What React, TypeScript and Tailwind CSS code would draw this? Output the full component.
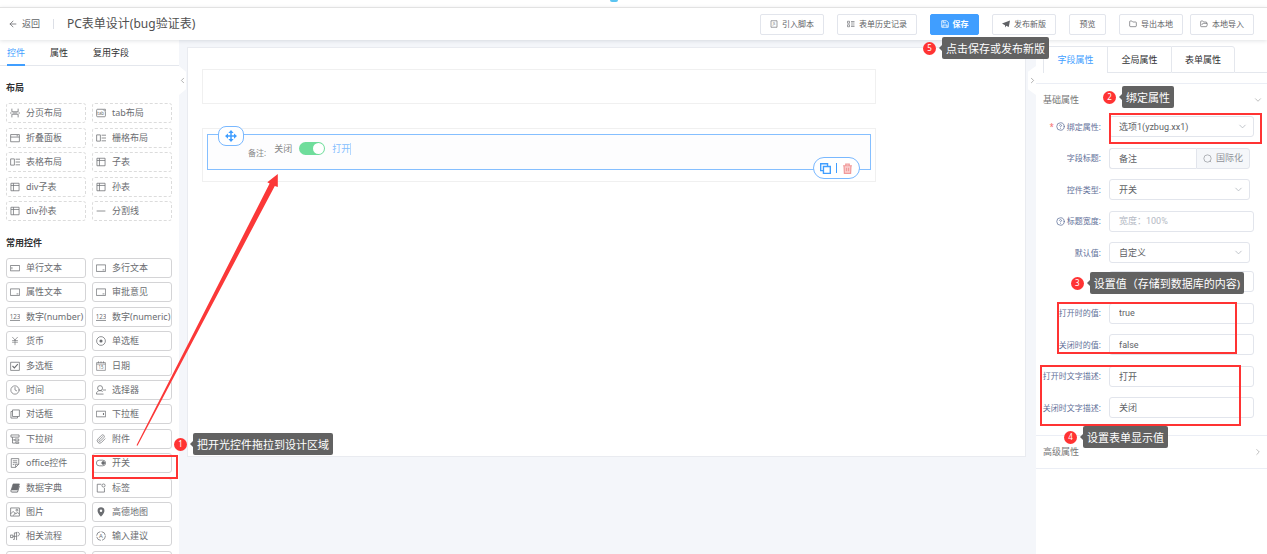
import type { ReactNode } from 'react';
import { ArrowLeft, ChevronDown, ChevronLeft, ChevronRight, CircleQuestionMark, Clock, Folder, FolderOpen, JapaneseYen, Paperclip } from 'lucide-react';

const Svg = ({ children, className = 'size-2.5' }: { children: ReactNode; className?: string }) => (
  <svg viewBox="0 0 16 16" fill="none" stroke="currentColor" strokeWidth="1.2" className={`${className} shrink-0`} aria-hidden="true">
    {children}
  </svg>
);

const Letters = ({ x, y, size, children }: { x: number; y: number; size: number; children: string }) => (
  <text x={x} y={y} fontSize={size} textAnchor="middle" fill="currentColor" stroke="none">{children}</text>
);

const icons: Record<string, ReactNode> = {
  page: <Svg><path d="M3 1v5h10V1M0 8h2.5M4.500 8h7M13.500 8H16M3 15v-5h10v5" /></Svg>,
  tab: <Svg><path d="M15 6v6.500a1.500 1.500 0 0 1-1.500 1.500h-11A1.500 1.500 0 0 1 1 12.500v-9A1.500 1.500 0 0 1 2.500 2H11l4 4M11.500 2H15v3" /><Letters x={7.5} y={11} size={7}>tab</Letters></Svg>,
  collapse: <Svg><path d="M1 2.500h14v11.500H1zM1 6.500h14M10.500 4.500h2.500" /></Svg>,
  columns: <Svg><path d="M7 3H1v10h6zM9 3.500h7M9 8h7M9 12.500h7" /></Svg>,
  table: <Svg><path d="M1.500 2h13v12h-13zM1.500 5.500h13M5.500 2v12" /></Svg>,
  line: <Svg><path d="M1 8h14" /></Svg>,
  input: <Svg><path d="M.6 4h14.800v8.500H.6zM3 6.500v3.500" /></Svg>,
  textarea: <Svg><path d="M.6 3h14.800v10.500H.6zM10.500 11h3" /></Svg>,
  number: <Svg><Letters x={8} y={10.5} size={10}>123</Letters><path d="M0 13.500h16" /></Svg>,
  yen: <JapaneseYen className="size-2.5 shrink-0" strokeWidth={1.5} />,
  radio: <Svg><circle cx="8" cy="8" r="7" /><circle cx="8" cy="8" r="2.500" fill="currentColor" stroke="none" /></Svg>,
  checkbox: <Svg><path d="M1 2h14v13H1z" /><path d="m4 8 3 3 5.500-6" strokeWidth="1.700" /></Svg>,
  date: <Svg><path d="M1 2.500h14v12.500H1zM1 5h14M4 .5v3M8 .5v3M12 .5v3" strokeWidth="1" /><Letters x={8} y={12.5} size={7}>15</Letters></Svg>,
  clock: <Clock className="size-2.5 shrink-0" strokeWidth={1.7} />,
  picker: <Svg><circle cx="6.500" cy="5" r="4" /><path d="M12 14.500H.6c0-3.500 2.500-5.500 6-5.500 1.500 0 3 .5 4 1.500M11 8h5" /></Svg>,
  dialog: <Svg><path d="M4 1.500h11v10.500H4zM4 4H1.500v10.500H12V12" /></Svg>,
  dropdown: <Svg><path d="M.6 3.500h14.800v9H.6z" /><path d="M12 6.500v3" strokeWidth="1.800" /></Svg>,
  tree: <Svg><path d="M1.500 1.500h13v3.500h-13zM4 5v9.500h4M4 9.500h4M8 8h6v3H8zM9 13h5v2H9z" /></Svg>,
  clip: <Paperclip className="size-2.5 shrink-0" strokeWidth={1.6} />,
  office: <Svg><path d="M14 10V1H2v14h7zM9 15v-5h5M4.500 4.500h7M4.500 7.500h7M4.500 10.500h2.500" /></Svg>,
  toggle: <Svg><rect x=".6" y="3.500" width="14.800" height="9" rx="4.500" /><circle cx="11.500" cy="8" r="2.300" fill="currentColor" /></Svg>,
  book: <Svg><path d="M5 1.500h10L12 11H2z" fill="currentColor" /><path d="M2 11c-1 1.500-.5 3.500 1 3.500h9L15 5" strokeWidth="1.500" /></Svg>,
  tag: <Svg><path d="M8.500 2H2v12.500h11.500V8" /><circle cx="12" cy="4" r="2.500" /></Svg>,
  image: <Svg><path d="M1 1.500h14v13H1zM1 11l4-4 4 4 3-2 3 2M5 14l4-5" /><circle cx="11" cy="5" r="1.500" /></Svg>,
  pin: <Svg><path fillRule="evenodd" d="M8 .5a5.500 5.500 0 0 0-5.500 5.500c0 4 5.500 9.500 5.500 9.500s5.500-5.500 5.500-9.500A5.500 5.500 0 0 0 8 .5zM8 4a2 2 0 1 1 0 4 2 2 0 0 1 0-4z" fill="currentColor" stroke="none" /></Svg>,
  flow: <Svg><path d="M.6 6.500h4v4h-4zM4.600 8.500h6M7 3v10.500M7 3h3.500M7 13.500H5M10.500 1.500v13M12 2c4 0 4 6 0 6" /></Svg>,
  suggest: <Svg><circle cx="8" cy="8" r="7" strokeDasharray="9 2" /><Letters x={8} y={11.5} size={9.5}>A</Letters></Svg>,
  script: <Svg><path d="M2 5V1.500h12v13H2V11M2 5v6" /><Letters x={8} y={10.5} size={6}>JS</Letters></Svg>,
  list: <Svg><path d="M1 2.500h4v4H1zM1 9.500h4v4H1zM8 3h7M8 6h7M8 10h7M8 13h7" /></Svg>,
  save: <Svg><path d="M1.500 1.500H11l3.500 3.500v9.500h-13zM4.500 1.500v4H10M4 14.500V10h8v4.500" strokeWidth="1.600" /></Svg>,
  plane: <Svg><path d="M0 7 16 1l-2.500 13-5-2.500L6 15v-4.500z" fill="currentColor" stroke="none" /></Svg>,
  folder: <Folder className="size-2" />,
  folderOpen: <FolderOpen className="size-2" />,
};

const layoutWidgets = [
  ['page', '分页布局'], ['tab', 'tab布局'],
  ['collapse', '折叠面板'], ['columns', '栅格布局'],
  ['columns', '表格布局'], ['table', '子表'],
  ['table', 'div子表'], ['table', '孙表'],
  ['table', 'div孙表'], ['line', '分割线'],
];

const commonWidgets = [
  ['input', '单行文本'], ['textarea', '多行文本'],
  ['textarea', '属性文本'], ['textarea', '审批意见'],
  ['number', '数字(number)'], ['number', '数字(numeric)'],
  ['yen', '货币'], ['radio', '单选框'],
  ['checkbox', '多选框'], ['date', '日期'],
  ['clock', '时间'], ['picker', '选择器'],
  ['dialog', '对话框'], ['dropdown', '下拉框'],
  ['tree', '下拉树'], ['clip', '附件'],
  ['office', 'office控件'], ['toggle', '开关'],
  ['book', '数据字典'], ['tag', '标签'],
  ['image', '图片'], ['pin', '高德地图'],
  ['flow', '相关流程'], ['suggest', '输入建议'],
  ['', ''], ['', ''],
];

function Widget({ icon, name, dashed }: { icon: string; name: string; dashed?: boolean }) {
  return (
    <button
      type="button"
      className={`flex h-5 items-center gap-1.5 whitespace-nowrap rounded-[3px] border px-[3px] text-[9px] leading-3 text-[#6b6d71] ${dashed ? 'border-dashed border-[#dcdcdc]' : 'border-[#d4d4d6]'}`}
    >
      {icons[icon]}
      {name}
    </button>
  );
}

function ToolButton({ icon, children, className }: { icon?: string; children: string; className: string }) {
  return (
    <button type="button" className={`flex h-[21px] items-center justify-center gap-1 whitespace-nowrap rounded-[2px] border text-[8px] leading-3 [&_svg]:size-2 ${className}`}>
      {icon && icons[icon]}
      {children}
    </button>
  );
}

function Field({ id, label, help, required, children }: { id: string; label: string; help?: boolean; required?: boolean; children: ReactNode }) {
  return (
    <div className="flex h-[21px] items-center gap-2">
      <label htmlFor={id} className="flex w-[65px] shrink-0 items-center justify-end gap-[2px] whitespace-nowrap text-[8px] leading-3 text-[#5f7099]">
        {required && <span className="text-[#f56c6c]">*</span>}
        {help && <CircleQuestionMark className="size-[9px]" />}
        {label}
      </label>
      {children}
    </div>
  );
}

const boxClass = "h-[21px] w-full min-w-0 rounded-[3px] border border-[#e2e5ec] bg-white px-[9px] font-[Roboto,'Noto_Sans_CJK_SC',sans-serif] text-[9px] leading-3 text-[#606266] outline-none placeholder:text-[#b4b9c4]";

function TextField({ id, label, value, placeholder, help }: { id: string; label: string; value?: string; placeholder?: string; help?: boolean }) {
  return (
    <Field id={id} label={label} help={help}>
      <div className="min-w-0 flex-1 pr-[13px]">
        <input id={id} type="text" defaultValue={value} placeholder={placeholder} className={`block ${boxClass}`} />
      </div>
    </Field>
  );
}

function SelectField({ id, label, value, wide }: { id: string; label: string; value: string; wide?: boolean }) {
  return (
    <Field id={id} label={label} help={wide} required={wide}>
      <div className={`min-w-0 flex-1 ${wide ? 'pr-[13px]' : 'pr-[17px]'}`}>
        <div className="relative">
          <select id={id} className={`block appearance-none ${boxClass}`}>
            <option>{value}</option>
          </select>
          <ChevronDown className="pointer-events-none absolute right-1.5 top-[5px] size-[11px] text-[#b4b8c0]" strokeWidth={1.8} />
        </div>
      </div>
    </Field>
  );
}

function Note({ step, children, className }: { step: number; children: string; className: string }) {
  return (
    <div className={`absolute flex items-center ${className}`}>
      <span className="flex size-[13px] items-center justify-center rounded-full bg-[#ff3333] text-[8px] leading-none text-white">{step}</span>
      <span className="ml-[3px] border-y-[3px] border-r-[3px] border-y-transparent border-r-[#626262]" />
      <span className="flex h-[22px] items-center whitespace-nowrap rounded-[2px] bg-[#626262] px-1 text-[11px] leading-none text-white">{children}</span>
    </div>
  );
}

function Sidebar() {
  return (
    <aside className="w-[179px] shrink-0 overflow-hidden bg-white">
      <nav className="flex h-[26px] items-stretch gap-[25px] border-b border-[#e4e7ed] pl-[7px] text-[9px] leading-3 text-[#303133]">
        <button type="button" className="-mb-px border-b-2 border-[#409eff] pt-0.5 text-[#409eff]">控件</button>
        <button type="button">属性</button>
        <button type="button">复用字段</button>
      </nav>
      <div className="pl-1.5 pr-[7px]">
        <h2 className="mb-[9px] mt-4 text-[9px] font-bold leading-3 text-[#303133]">布局</h2>
        <div className="grid h-[118px] grid-cols-2 content-between gap-x-1.5">
          {layoutWidgets.map(([icon, name]) => <Widget key={name} icon={icon} name={name} dashed />)}
        </div>
        <h2 className="mb-[9px] mt-4 text-[9px] font-bold leading-3 text-[#303133]">常用控件</h2>
        <div className="grid h-[313px] grid-cols-2 content-between gap-x-1.5">
          {commonWidgets.map(([icon, name], i) => <Widget key={i} icon={icon} name={name} />)}
        </div>
      </div>
    </aside>
  );
}

function Canvas() {
  return (
    <main className="relative min-w-0 flex-1 pl-2 pr-[10px] pt-[7px]">
      <button type="button" aria-label="收起左侧" className="absolute left-0 top-[26px] flex h-[29px] w-[7px] items-center justify-center bg-white text-[#999] [clip-path:polygon(0_0,100%_20%,100%_80%,0_100%)]">
        <ChevronLeft className="size-[9px] shrink-0" />
      </button>
      <button type="button" aria-label="收起右侧" className="absolute right-0 top-[26px] flex h-[29px] w-2 items-center justify-center bg-white text-[#999] [clip-path:polygon(0_20%,100%_0,100%_100%,0_80%)]">
        <ChevronRight className="size-[9px] shrink-0" />
      </button>
      <div className="min-h-[410px] border border-[#e9ebf0] bg-white px-[14px] pt-[21px]">
        <div className="h-[35px] w-5/6 border border-[#f0f0f0]" />
        <div className="mt-6 w-5/6 border border-[#f0f0f0] px-1 pb-[11px] pt-[5px]">
          <div className="relative flex h-9 border border-[#85bfff] bg-[#fdfdfe] pl-10">
            <span className="absolute -top-[9px] left-2.5 flex h-5 w-[26px] items-center justify-center rounded-[8px] border border-[#79b8ff] bg-white text-[#409eff]">
              <Svg className="size-3">
                <path d="M8 2.500v11M2.500 8h11" strokeWidth="2" />
                <path d="M8 0l3.500 4h-7zM8 16l-3.500-4h7zM0 8l4-3.500v7zM16 8l-4 3.500v-7z" fill="currentColor" stroke="none" />
              </Svg>
            </span>
            <label htmlFor="remark" className="mt-3 text-[8px] leading-3 text-[#888]">备注:</label>
            <div className="ml-2 mt-[7px] flex h-[13px] items-center text-[9px] leading-3 text-[#888]">
              <span>关闭</span>
              <input
                id="remark"
                type="checkbox"
                role="switch"
                defaultChecked
                className="ml-[7px] mr-[7px] h-[13px] w-[26px] appearance-none rounded-full bg-[#6fdd9b] before:ml-3.5 before:mt-px before:block before:size-[11px] before:rounded-full before:bg-white"
              />
              <span className="border-r border-[#b5d8ff] text-[#85bfff]">打开</span>
            </div>
            <div className="absolute -bottom-2.5 right-2.5 flex h-[22px] w-[47px] items-center justify-center gap-[5px] rounded-full border border-[#79b8ff] bg-white">
              <button type="button" aria-label="复制" className="text-[#409eff]">
                <Svg className="size-[11px]"><path d="M5 5h10v10H5zM5 11H1V1h10v4" strokeWidth="2" /></Svg>
              </button>
              <span className="h-2.5 w-px bg-[#409eff]" />
              <button type="button" aria-label="删除" className="text-[#f19a9a]">
                <Svg className="size-[11px]">
                  <path d="M3 4h10l-.5 11h-9z" fill="#f9d0d0" stroke="none" />
                  <path d="M1.500 4h13M5.500 4V1.500h5V4M3 4l.5 11h9L13 4M6.500 7v5M9.500 7v5" strokeWidth="1.800" />
                </Svg>
              </button>
            </div>
          </div>
        </div>
      </div>
    </main>
  );
}

function Properties() {
  return (
    <aside className="w-[231px] shrink-0 bg-white pt-1.5">
      <nav className="flex h-[27px] pl-[7px] text-[9px] leading-3 text-[#303133]">
        <button type="button" className="w-16 border-l border-t border-[#e4e7ed] text-[#409eff]">字段属性</button>
        <button type="button" className="w-16 border border-r-0 border-[#e4e7ed]">全局属性</button>
        <button type="button" className="w-16 rounded-tr-[3px] border border-[#e4e7ed]">表单属性</button>
        <span className="flex-1 border-b border-[#e4e7ed]" />
      </nav>
      <button type="button" className="mt-2.5 flex h-[33px] w-full items-center justify-between border-t border-[#ebeef5] pl-[7px] pr-1 text-[9px] leading-3 text-[#777]">
        基础属性
        <ChevronDown className="size-2.5 text-[#999]" strokeWidth={1.5} />
      </button>
      <div className="flex h-[147px] flex-col justify-between">
        <SelectField id="bind" label="绑定属性:" value="选项1(yzbug.xx1)" wide />
        <Field id="title" label="字段标题:">
          <div className="flex min-w-0 flex-1 pr-[17px]">
            <input id="title" type="text" defaultValue="备注" className={`${boxClass} rounded-r-none border-r-0`} />
            <button type="button" className="flex h-[21px] w-[54px] shrink-0 items-center justify-center gap-1 rounded-r-[3px] border border-[#e2e5ec] bg-[#f5f7fa] text-[9px] leading-3 text-[#909399]">
              <Svg className="size-[9px]"><circle cx="8" cy="8" r="6.500" /><path d="m12 12 2.500 2.500" /></Svg>
              国际化
            </button>
          </div>
        </Field>
        <SelectField id="type" label="控件类型:" value="开关" />
        <TextField id="labelWidth" label="标题宽度:" placeholder="宽度：100%" help />
        <SelectField id="default" label="默认值:" value="自定义" />
      </div>
      <div className="mt-2 flex h-[147px] flex-col justify-between">
        <TextField id="custom" label="" />
        <TextField id="onValue" label="打开时的值:" value="true" />
        <TextField id="offValue" label="关闭时的值:" value="false" />
        <TextField id="onText" label="打开时文字描述:" value="打开" />
        <TextField id="offText" label="关闭时文字描述:" value="关闭" />
      </div>
      <button type="button" className="mt-[17px] flex h-[34px] w-full items-center justify-between border-y border-[#ebeef5] pl-[7px] pr-1 text-[9px] leading-3 text-[#777]">
        高级属性
        <ChevronRight className="size-2.5 text-[#999]" strokeWidth={1.5} />
      </button>
    </aside>
  );
}

// numbered walkthrough marks that float over the designer
function Walkthrough() {
  return (
    <div className="pointer-events-none absolute inset-0 z-20">
      <svg className="absolute left-[130px] top-[170px] h-[280px] w-[155px]" viewBox="0 0 155 280" aria-hidden="true">
        <path d="M6.500 275.300 139.600 13.600 137.300 12.200 147.800 4v13l-3-1L7.500 275.800z" fill="#fb3838" />
      </svg>
      <div className="absolute left-[92px] top-[455px] h-6 w-[86px] border-2 border-[#ff3333]" />
      <div className="absolute right-[5px] top-[113px] h-[31px] w-[153px] border-2 border-[#ff3333]" />
      <div className="absolute right-[30px] top-[302px] h-[52px] w-[180px] border-2 border-[#ff3333]" />
      <div className="absolute right-[26px] top-[365px] h-[61px] w-[201px] border-2 border-[#ff3333]" />
      <Note step={1} className="left-[174px] top-[433px]">把开光控件拖拉到设计区域</Note>
      <Note step={2} className="right-[93px] top-[86px]">绑定属性</Note>
      <Note step={3} className="right-[23px] top-[272px]">设置值（存储到数据库的内容)</Note>
      <Note step={4} className="right-[99px] top-[426px]">设置表单显示值</Note>
      <Note step={5} className="right-[218px] top-[37px]">点击保存或发布新版</Note>
    </div>
  );
}

export default function App() {
  return (
    <div className="relative flex h-screen flex-col overflow-hidden bg-[#f4f6fa] font-['Noto_Sans','Noto_Sans_CJK_SC',sans-serif]">
      <div className="flex h-[7px] shrink-0 justify-center bg-white">
        <span className="mr-10 h-[2px] w-2 rounded-b-full bg-[#5bc4f1]" />
      </div>
      <header className="z-10 flex h-[33px] shrink-0 items-center border-t border-[#e2e2e2] bg-white pl-2 pr-[13px] shadow-[0_1px_4px_rgba(0,21,41,0.12)]">
        <a href="#" className="flex items-center gap-1 text-[9px] leading-3 text-[#606266]">
          <ArrowLeft className="size-2.5" strokeWidth={1.8} />
          返回
        </a>
        <span className="ml-[13px] mr-[13px] h-2.5 w-px bg-[#dcdfe6]" />
        <h1 className="whitespace-nowrap text-xs leading-4 text-[#4f4f4f]">PC表单设计(bug验证表)</h1>
        <div className="ml-auto flex gap-[13px]">
          <ToolButton icon="script" className="w-16 border-[#e2e5ec] text-[#606266]">引入脚本</ToolButton>
          <ToolButton icon="list" className="w-20 border-[#e2e5ec] text-[#606266]">表单历史记录</ToolButton>
          <ToolButton icon="save" className="w-[49px] border-[#409eff] bg-[#409eff] font-bold text-white">保存</ToolButton>
          <ToolButton icon="plane" className="w-16 border-[#e2e5ec] text-[#606266]">发布新版</ToolButton>
          <ToolButton className="w-[37px] border-[#e2e5ec] text-[#606266]">预览</ToolButton>
          <div className="flex gap-[7px]">
            <ToolButton icon="folder" className="w-16 border-[#e2e5ec] text-[#606266]">导出本地</ToolButton>
            <ToolButton icon="folderOpen" className="w-16 border-[#e2e5ec] text-[#606266]">本地导入</ToolButton>
          </div>
        </div>
      </header>
      <div className="flex min-h-0 flex-1">
        <Sidebar />
        <Canvas />
        <Properties />
      </div>
      <Walkthrough />
    </div>
  );
}
